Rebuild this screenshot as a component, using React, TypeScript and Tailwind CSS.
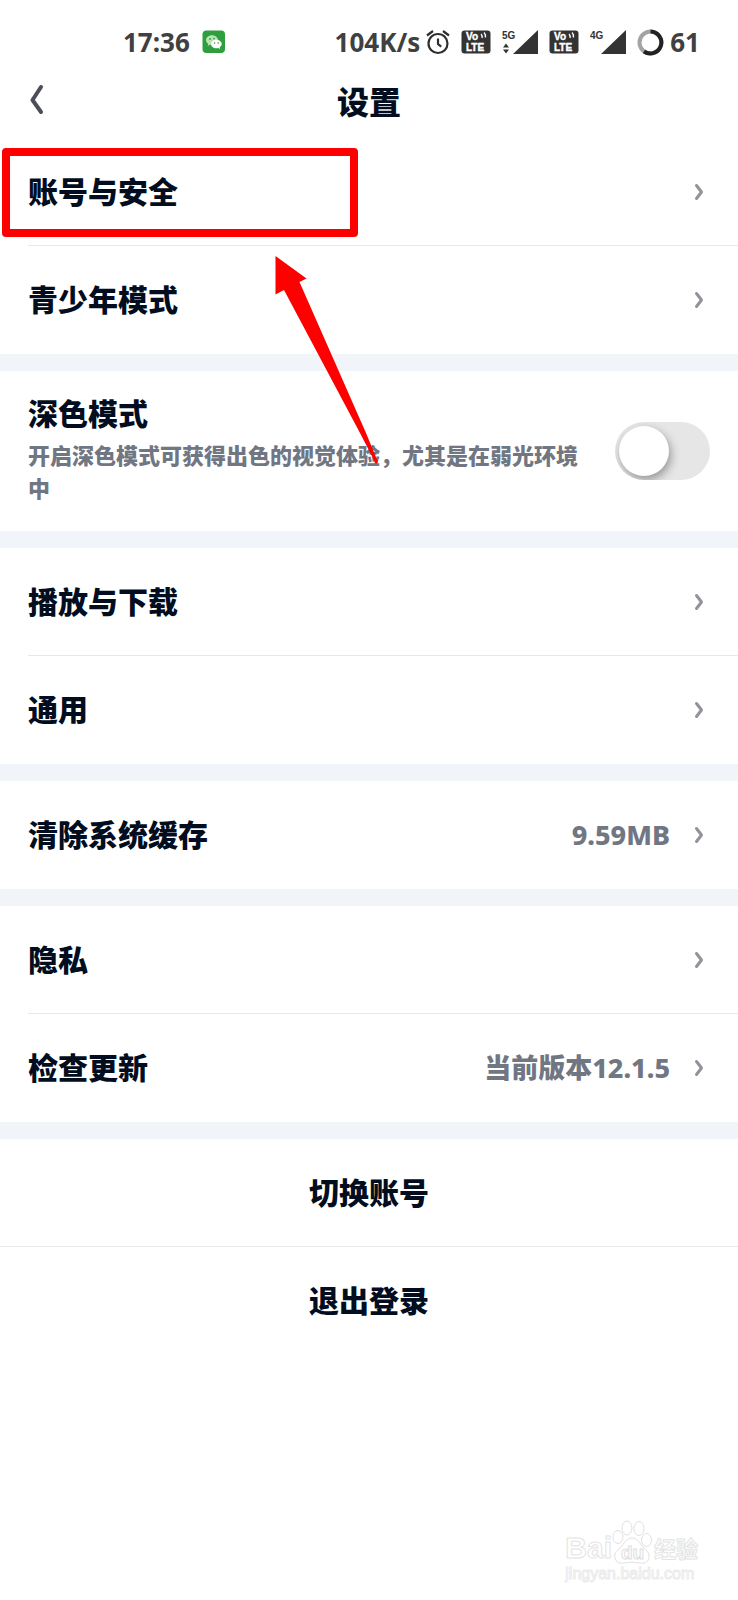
import type { ReactNode } from "react"

function WeChatIcon() {
  return (
    <svg width="24" height="24" viewBox="0 0 24 24" aria-hidden="true">
      <rect x="0.5" y="0.5" width="22.5" height="22.5" rx="4" fill="#2f9e3c" />
      <path
        d="M10 5.2c-3.4 0-6 2.2-6 4.9 0 1.600.9 2.900 2.200 3.800l-.6 2 2.300-1.200 2.100.3c3.300 0 6-2.200 6-4.900s-2.700-4.900-6-4.900z"
        fill="#b9e3b4"
      />
      <circle cx="8" cy="9" r="0.9" fill="#2f9e3c" />
      <circle cx="12" cy="8.600" r="0.9" fill="#2f9e3c" />
      <path
        d="M14.300 9.700c-3 0-5.300 1.900-5.300 4.300s2.300 4.300 5.300 4.300c.7 0 1.300-.1 1.900-.3l2 1-.5-1.800c1.200-.8 2-1.900 2-3.200 0-2.400-2.400-4.300-5.400-4.300z"
        fill="#fff"
      />
      <circle cx="12.600" cy="13" r="0.8" fill="#2f9e3c" />
      <circle cx="16.200" cy="13" r="0.8" fill="#2f9e3c" />
    </svg>
  )
}

function AlarmIcon() {
  return (
    <svg width="24" height="26" viewBox="0 0 24 26" fill="none" stroke="#2e2e2e" aria-hidden="true">
      <circle cx="12" cy="14.500" r="9.500" strokeWidth="2.200" />
      <path d="M12 9.500v5.500l3.200 2.600" strokeWidth="2.200" />
      <path d="M1 6.500 7 2M23 6.500 17 2" strokeWidth="2.200" />
    </svg>
  )
}

function VolteIcon() {
  return (
    <svg width="30" height="24" viewBox="0 0 30 24" aria-hidden="true">
      <rect x="0.5" y="0.5" width="29" height="23" rx="3" fill="#333" />
      <g fill="#fff" stroke="#fff" strokeWidth="0.4" fontFamily="Liberation Sans, sans-serif" fontWeight="700">
        <text x="5" y="10" fontSize="10">Vo</text>
        <text x="5" y="21" fontSize="10">LTE</text>
      </g>
      <path d="M20 4q1.500 1.500 1 4M23 2.500q2 2 1.300 5" fill="none" stroke="#fff" strokeWidth="1.300" />
    </svg>
  )
}

function SignalIcon({ label, arrows }: { label: string; arrows?: boolean }) {
  return (
    <svg width="36" height="26" viewBox="0 0 36 26" aria-hidden="true">
      <text x="0" y="10" fontSize="10" fontWeight="700" fontFamily="Liberation Sans, sans-serif" fill="#333">
        {label}
      </text>
      <path d="M36 1v24H11z" fill="#333" />
      {arrows && <path d="M1 18.500 4 14.500l3 4zM1 20.500h6L4 24.500z" fill="#333" />}
    </svg>
  )
}

function BatteryRing() {
  return (
    <svg width="27" height="27" viewBox="0 0 27 27" fill="none" strokeWidth="4" aria-hidden="true">
      <circle cx="13.500" cy="13.500" r="11" stroke="#a3a3a3" />
      <path d="M13.500 2.500a11 11 0 1 1-6.500 20" stroke="#222" />
    </svg>
  )
}

function StatusBar() {
  return (
    <div className="flex h-[84px] items-center justify-between pr-[38px] pl-[123px] text-[26px] leading-8 font-bold text-[#404040]">
      <div className="flex items-center gap-3">
        <span>17:36</span>
        <WeChatIcon />
      </div>
      <div className="flex items-center gap-[11px]">
        <div className="flex items-center gap-1.5">
          <span>104K/s</span>
          <AlarmIcon />
        </div>
        <VolteIcon />
        <SignalIcon label="5G" arrows />
        <VolteIcon />
        <SignalIcon label="4G" />
        <div className="flex items-center gap-1.5">
          <BatteryRing />
          <span>61</span>
        </div>
      </div>
    </div>
  )
}

function Chevron() {
  return (
    <svg width="24" height="24" viewBox="0 0 24 24" fill="none" aria-hidden="true">
      <path
        d="M10.500 5.500 15.500 12l-5 6.500"
        stroke="#92929b"
        strokeWidth="3"
        strokeLinecap="round"
        strokeLinejoin="round"
      />
    </svg>
  )
}

function Row({ label, value, divided }: { label: string; value?: string; divided?: boolean }) {
  return (
    <button type="button" className="block w-full pl-7 text-left">
      <span
        className={`flex h-[108px] items-center border-b pr-7 ${divided ? "border-[#e8e8ea]" : "border-transparent"}`}
      >
        <span className="flex-1">{label}</span>
        {value && <span className="mr-4 text-[27px] font-extrabold text-[#717683]">{value}</span>}
        <Chevron />
      </span>
    </button>
  )
}

function Group({ children }: { children: ReactNode }) {
  return <section className="relative bg-white">{children}</section>
}

function Highlight() {
  return (
    <>
      <div className="pointer-events-none absolute top-[10px] left-[2px] h-[89px] w-[356px] rounded-sm border-8 border-[#fe0000]" />
      <svg
        className="pointer-events-none absolute top-[118px] left-[275px] z-10"
        width="104"
        height="210"
        viewBox="0 0 104 210"
        aria-hidden="true"
      >
        <path d="M0.500 0 31.500 22.500 24.500 26 91 177 103 206 101 208 85 177 9 34 0.500 38.500z" fill="#fe0000" />
      </svg>
    </>
  )
}

function Watermark() {
  return (
    <div className="absolute right-[40px] bottom-[16px] text-white [-webkit-text-stroke:1px_#e4e4e4]">
      <div className="flex items-end">
        <span className="font-['Liberation_Sans',sans-serif] text-[30px] leading-8 font-bold">Bai</span>
        <svg width="40" height="44" viewBox="0 0 40 44" fill="#fff" stroke="#e0e0e0" aria-hidden="true">
          <ellipse cx="6" cy="17" rx="5" ry="6.500" />
          <ellipse cx="15" cy="8" rx="5" ry="7" />
          <ellipse cx="27" cy="8.500" rx="5" ry="7" />
          <ellipse cx="34.500" cy="20" rx="5" ry="6.500" />
          <path d="M20 18c-6 0-8 6-12 10-4 3-6 6-5 10 1 5 6 5.500 10 5 5-1 9-1 14 0 5 .5 9 0 10-5 .6-4-1-7-5-10-4-4-6-10-12-10z" />
          <text x="9" y="39" fontSize="19" fontWeight="700" fontFamily="Liberation Sans, sans-serif">
            du
          </text>
        </svg>
        <span className="ml-0.5 text-[22px] leading-8 font-bold">经验</span>
      </div>
      <div className="font-['Liberation_Sans',sans-serif] text-base leading-5 font-normal [-webkit-text-stroke:1px_#ebebeb]">
        jingyan.baidu.com
      </div>
    </div>
  )
}

export default function App() {
  return (
    <main className="relative min-h-screen bg-white font-['Noto_Sans','Noto_Sans_CJK_SC',sans-serif] text-[30px] leading-[46px] font-black text-[#020d20]">
      <StatusBar />
      <header className="relative flex h-[54px] justify-center">
        <button type="button" aria-label="返回" className="absolute top-0 left-7">
          <svg width="18" height="32" viewBox="0 0 18 32" fill="none" aria-hidden="true">
            <path
              d="M13 3 4.500 16 13 28"
              stroke="#4b4d58"
              strokeWidth="4"
              strokeLinecap="round"
              strokeLinejoin="round"
            />
          </svg>
        </button>
        <h1 className="text-[32px] leading-9">设置</h1>
      </header>

      <div className="flex flex-col gap-[17px] bg-[#f1f4f9]">
        <Group>
          <Row label="账号与安全" divided />
          <Row label="青少年模式" />
          <Highlight />
        </Group>
        <Group>
          <div className="flex min-h-[160px] items-start gap-7 px-7 pt-5">
            <label htmlFor="dark-mode" className="flex-1">
              <span className="block">深色模式</span>
              <span className="mt-0.5 block text-[22px] leading-[33px] text-[#717683]">
                开启深色模式可获得出色的视觉体验，尤其是在弱光环境中
              </span>
            </label>
            <input
              id="dark-mode"
              type="checkbox"
              role="switch"
              className="mt-[31px] h-[58px] w-[95px] shrink-0 appearance-none overflow-hidden rounded-full bg-[#e6e6e6] p-1 before:block before:size-[50px] before:rounded-full before:bg-white before:shadow-[2px_4px_10px_rgba(0,0,0,0.35)] checked:bg-green-500 checked:before:ml-auto"
            />
          </div>
        </Group>
        <Group>
          <Row label="播放与下载" divided />
          <Row label="通用" />
        </Group>
        <Group>
          <Row label="清除系统缓存" value="9.59MB" />
        </Group>
        <Group>
          <Row label="隐私" divided />
          <Row label="检查更新" value="当前版本12.1.5" />
        </Group>
        <Group>
          <button type="button" className="block h-[108px] w-full border-b border-[#e8e8ea]">
            切换账号
          </button>
          <button type="button" className="block h-[108px] w-full">
            退出登录
          </button>
        </Group>
      </div>
      <Watermark />
    </main>
  )
}
